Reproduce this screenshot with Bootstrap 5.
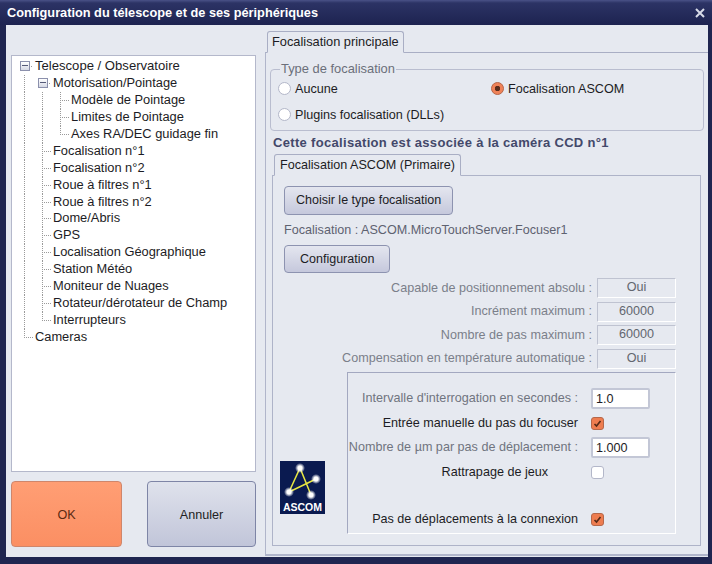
<!DOCTYPE html>
<html lang="fr">
<head>
  <meta charset="UTF-8">
  <title>Configuration du télescope</title>
  <link href="https://cdn.jsdelivr.net/npm/bootstrap@5.3.2/dist/css/bootstrap.min.css" rel="stylesheet">
  <style>
    body { margin: 0; width: 712px; height: 564px; overflow: hidden; background: #1f2550; font-family: "Liberation Sans", Arial, sans-serif; font-size: 12.6px; color: #1c1c24; }
    .win-title { height: 25px; padding: 0 7px 0 7px; color: #fff; font-weight: 700; font-size: 12.75px; background: linear-gradient(#4a5287 0, #2c3365 3px, #1d2350 100%); }
    .win-close { width: 10px; height: 10px; }
    .win-client { width: 702px; height: 532px; margin-left: 6px; background: #e6e9f0; }

    .side-col { width: 245px; margin-left: 5px; padding-top: 30px; }
    .tree-box { height: 417px; background: #fff; border: 1px solid #b4b8cb; padding: 2px 0 0 3px; font-size: 12.85px; }
    .tree-row { height: 16.95px; line-height: 16.95px; white-space: nowrap; }
    .tg { width: 18px; height: 100%; flex: none; background-repeat: no-repeat; }
    .tg-v { background-image: repeating-linear-gradient(#9a9a9a 0 1px, transparent 1px 2px); background-size: 1px 100%; background-position: 9px 0; }
    .tg-t { background-image: repeating-linear-gradient(#9a9a9a 0 1px, transparent 1px 2px), repeating-linear-gradient(90deg, #9a9a9a 0 1px, transparent 1px 2px); background-size: 1px 100%, 9px 1px; background-position: 9px 0, 9px 8px; }
    .tg-l { background-image: repeating-linear-gradient(#9a9a9a 0 1px, transparent 1px 2px), repeating-linear-gradient(90deg, #9a9a9a 0 1px, transparent 1px 2px); background-size: 1px 9px, 9px 1px; background-position: 9px 0, 9px 8px; }
    .tg-m { display: flex; align-items: center; padding-left: 5px; background-image: repeating-linear-gradient(90deg, #9a9a9a 0 1px, transparent 1px 2px); background-size: 4px 1px; background-position: 14px 8px; }
    .tg-m i { display: block; width: 10px; height: 10px; border: 1px solid #8b90ac; background: linear-gradient(#fff, #d5d8e4); position: relative; }
    .tg-m i::after { content: ""; position: absolute; left: 1px; right: 1px; top: 3px; height: 1px; background: #555a78; }
    .tree-label { margin-left: 2px; }
    .tree-root { font-size: 13.1px; }

    .big-btn { height: 66px; padding: 2px 0 0; border-radius: 4px; font-size: 12.6px; color: #222; }
    .big-ok, .big-ok:hover { width: 111px; background: linear-gradient(#ff9e74, #fb8f63); border: 1px solid #cf866b; color: #5a2a12; }
    .big-no, .big-no:hover { width: 109px; background: linear-gradient(#dfe2ec, #c1c5d9); border: 1px solid #7e85a6; color: #222; }
    .side-btns { margin-top: 9px; }

    .main-col { width: 443px; margin-left: 9px; padding-top: 5px; }
    .nav-tabs.soft-tabs { border-bottom: 0; flex-wrap: nowrap; }
    .soft-tabs .nav-link, .soft-tabs .nav-link.active { height: 22px; line-height: 19px; padding: 0 5px; margin: 0; font-size: 12.6px; color: #1c1c24; white-space: nowrap; background: #e6e9f0; border: 1px solid #a9aec4; border-bottom-color: #e6e9f0; border-radius: 3px 3px 0 0; position: relative; bottom: -1px; }
    .tabs-outer { margin-left: 2px; }
    .tabs-outer .nav-link, .tabs-outer .nav-link.active { padding: 0 4px; font-size: 12.8px; }
    .tabs-inner .nav-link, .tabs-inner .nav-link.active { line-height: 21px; }
    .pane-outer { height: 504px; border: 1px solid #b0b5ca; border-right: 0; border-top-color: #a9aec4; border-bottom-width: 2px; }
    .type-group { width: 434px; height: 69px; margin: 9px 0 0 4px; padding: 0 0 0 7px; border: 1px solid #b9bdcf; border-radius: 4px; min-width: 0; }
    .type-group legend { float: none; width: auto; margin: 0 0 0 2px; padding: 0 1px; font-size: 12.9px; line-height: 14px; color: #6b6f7a; }
    .radio-row { height: 26px; }
    .radio-cell { width: 213px; }
    .form-check-input.soft-radio { width: 13px; height: 13px; margin: 0 4px 0 0; flex: none; border: 1px solid #b3b7c9; background-color: #fff; background-image: none; box-shadow: none; }
    .form-check-input.soft-radio:checked { border-color: #b5674a; background-color: #f08258; background-image: radial-gradient(circle, #5a2c1c 0 2.5px, transparent 3px); }
    .assoc-text { margin: 4px 0 3px 7px; font-size: 13px; line-height: 15px; font-weight: 700; letter-spacing: .32px; color: #43486a; }
    .tabs-inner { margin-left: 8px; }
    .pane-inner { width: 429px; height: 371px; margin-left: 6px; border: 1px solid #aeb3c8; padding: 10px 0 0 11px; }
    .small-btn, .small-btn:hover { height: 29px; padding: 0 11px; font-size: 12.5px; color: #1c1c24; background: linear-gradient(#e4e6ef, #c5c8dc); border: 1px solid #8d93b0; border-radius: 4px; }
    .small-btn-cfg, .small-btn-cfg:hover { display: block; height: 28px; padding: 0 15px; margin-bottom: 5px; }
    .focus-name { height: 30px; line-height: 30px; color: #5e6270; }
    .info-row { height: 20px; margin-bottom: 3.6px; padding-right: 24px; color: #7b7f8a; }
    .info-val { width: 79px; height: 20px; margin-left: 5px; line-height: 16px; text-align: center; color: #62666f; border: 1px solid; border-color: #bfc3d1 #fff #fff #bfc3d1; }
    .logo-box { width: 45px; height: 53px; margin: 0 22px 20px -4px; flex: none; }
    .opt-group { width: 329px; height: 162px; padding-top: 13px; border: 1px solid; border-color: #a3a8c0 #fff #fff #a3a8c0; }
    .opt-row { height: 24.5px; }
    .opt-gap { height: 23px; }
    .opt-label { width: 230px; flex: none; text-align: right; white-space: nowrap; }
    .opt-short { padding-right: 30px; }
    .opt-dim { color: #70747f; }
    .opt-ctl { margin-left: 13px; }
    .opt-input.form-control { width: 59px; height: 21px; min-height: 0; padding: 0 3px; font-size: 12.6px; line-height: 17px; color: #1c1c24; border: 2px solid #c3c7d6; border-radius: 2px; box-shadow: none; }
    .form-check-input.soft-check { width: 13px; height: 13px; margin: 0 0 0 13px; border: 1px solid #b3b7c9; border-radius: 3px; background-color: #fff; box-shadow: none; }
    .form-check-input.soft-check:checked { background-color: #ee7d50; border-color: #b5674a; background-image: url("data:image/svg+xml,%3csvg xmlns='http://www.w3.org/2000/svg' viewBox='0 0 13 13'%3e%3cpath fill='none' stroke='%23552a18' stroke-width='1.7' d='M3.5 7l2 2 4-5'/%3e%3c/svg%3e"); background-size: 13px 13px; }
  </style>
</head>
<body>
  <div class="win-title d-flex align-items-center justify-content-between">
    <span>Configuration du télescope et de ses périphériques</span>
    <svg class="win-close" viewBox="0 0 10 10"><path d="M1 1l8 8M9 1l-8 8" stroke="#d8dbe8" stroke-width="2"/></svg>
  </div>
  <div class="win-client d-flex">
    <div class="side-col">
      <div class="tree-box">
        <div class="tree-row d-flex"><span class="tg tg-m"><i></i></span><span class="tree-label tree-root">Telescope / Observatoire</span></div>
        <div class="tree-row d-flex"><span class="tg tg-v"></span><span class="tg tg-m"><i></i></span><span class="tree-label">Motorisation/Pointage</span></div>
        <div class="tree-row d-flex"><span class="tg tg-v"></span><span class="tg tg-v"></span><span class="tg tg-t"></span><span class="tree-label">Modèle de Pointage</span></div>
        <div class="tree-row d-flex"><span class="tg tg-v"></span><span class="tg tg-v"></span><span class="tg tg-t"></span><span class="tree-label">Limites de Pointage</span></div>
        <div class="tree-row d-flex"><span class="tg tg-v"></span><span class="tg tg-v"></span><span class="tg tg-l"></span><span class="tree-label">Axes RA/DEC guidage fin</span></div>
        <div class="tree-row d-flex"><span class="tg tg-v"></span><span class="tg tg-t"></span><span class="tree-label">Focalisation n°1</span></div>
        <div class="tree-row d-flex"><span class="tg tg-v"></span><span class="tg tg-t"></span><span class="tree-label">Focalisation n°2</span></div>
        <div class="tree-row d-flex"><span class="tg tg-v"></span><span class="tg tg-t"></span><span class="tree-label">Roue à filtres n°1</span></div>
        <div class="tree-row d-flex"><span class="tg tg-v"></span><span class="tg tg-t"></span><span class="tree-label">Roue à filtres n°2</span></div>
        <div class="tree-row d-flex"><span class="tg tg-v"></span><span class="tg tg-t"></span><span class="tree-label">Dome/Abris</span></div>
        <div class="tree-row d-flex"><span class="tg tg-v"></span><span class="tg tg-t"></span><span class="tree-label">GPS</span></div>
        <div class="tree-row d-flex"><span class="tg tg-v"></span><span class="tg tg-t"></span><span class="tree-label">Localisation Géographique</span></div>
        <div class="tree-row d-flex"><span class="tg tg-v"></span><span class="tg tg-t"></span><span class="tree-label">Station Météo</span></div>
        <div class="tree-row d-flex"><span class="tg tg-v"></span><span class="tg tg-t"></span><span class="tree-label">Moniteur de Nuages</span></div>
        <div class="tree-row d-flex"><span class="tg tg-v"></span><span class="tg tg-t"></span><span class="tree-label">Rotateur/dérotateur de Champ</span></div>
        <div class="tree-row d-flex"><span class="tg tg-v"></span><span class="tg tg-l"></span><span class="tree-label">Interrupteurs</span></div>
        <div class="tree-row d-flex"><span class="tg tg-l"></span><span class="tree-label">Cameras</span></div>
      </div>
      <div class="d-flex justify-content-between side-btns">
        <button type="button" class="btn big-btn big-ok">OK</button>
        <button type="button" class="btn big-btn big-no">Annuler</button>
      </div>
    </div>

    <div class="main-col">
      <ul class="nav nav-tabs soft-tabs tabs-outer">
        <li class="nav-item"><a class="nav-link active" href="#">Focalisation principale</a></li>
      </ul>
      <div class="pane-outer">
        <fieldset class="type-group">
          <legend>Type de focalisation</legend>
          <div class="radio-row d-flex align-items-center">
            <label class="radio-cell d-flex align-items-center"><input class="form-check-input soft-radio" type="radio" name="foc">Aucune</label>
            <label class="d-flex align-items-center"><input class="form-check-input soft-radio" type="radio" name="foc" checked>Focalisation ASCOM</label>
          </div>
          <div class="radio-row d-flex align-items-center">
            <label class="d-flex align-items-center"><input class="form-check-input soft-radio" type="radio" name="foc">Plugins focalisation (DLLs)</label>
          </div>
        </fieldset>
        <div class="assoc-text">Cette focalisation est associée à la caméra CCD n°1</div>
        <ul class="nav nav-tabs soft-tabs tabs-inner">
          <li class="nav-item"><a class="nav-link active" href="#">Focalisation ASCOM (Primaire)</a></li>
        </ul>
        <div class="pane-inner">
          <button type="button" class="btn small-btn">Choisir le type focalisation</button>
          <div class="focus-name">Focalisation : ASCOM.MicroTouchServer.Focuser1</div>
          <button type="button" class="btn small-btn small-btn-cfg">Configuration</button>
          <div class="info-row d-flex justify-content-end align-items-center"><span>Capable de positionnement absolu :</span><span class="info-val">Oui</span></div>
          <div class="info-row d-flex justify-content-end align-items-center"><span>Incrément maximum :</span><span class="info-val">60000</span></div>
          <div class="info-row d-flex justify-content-end align-items-center"><span>Nombre de pas maximum :</span><span class="info-val">60000</span></div>
          <div class="info-row d-flex justify-content-end align-items-center"><span>Compensation en température automatique :</span><span class="info-val">Oui</span></div>
          <div class="d-flex align-items-end">
            <svg class="logo-box" viewBox="0 0 45 53">
              <defs>
                <radialGradient id="glow"><stop offset="0.4" stop-color="#fff"/><stop offset="1" stop-color="#fff" stop-opacity="0"/></radialGradient>
              </defs>
              <rect width="45" height="53" fill="#0a1a50"/>
              <path d="M9 31L20 7L31 34M9 31L36 18" fill="none" stroke="#e6e642" stroke-width="1.5"/>
              <circle cx="20" cy="7" r="5" fill="url(#glow)"/>
              <circle cx="36" cy="18" r="5" fill="url(#glow)"/>
              <circle cx="9" cy="31" r="5" fill="url(#glow)"/>
              <circle cx="31" cy="34" r="5" fill="url(#glow)"/>
              <text x="22.5" y="50" text-anchor="middle" fill="#fff" font-family="Liberation Sans" font-weight="700" font-size="10.5">ASCOM</text>
            </svg>
            <div class="opt-group">
              <div class="opt-row d-flex align-items-center"><span class="opt-label opt-dim">Intervalle d'interrogation en secondes :</span><input class="form-control opt-input opt-ctl" value="1.0"></div>
              <div class="opt-row d-flex align-items-center"><span class="opt-label">Entrée manuelle du pas du focuser</span><input class="form-check-input soft-check" type="checkbox" checked></div>
              <div class="opt-row d-flex align-items-center"><span class="opt-label opt-dim">Nombre de µm par pas de déplacement :</span><input class="form-control opt-input opt-ctl" value="1.000"></div>
              <div class="opt-row d-flex align-items-center"><span class="opt-label opt-short">Rattrapage de jeux</span><input class="form-check-input soft-check" type="checkbox"></div>
              <div class="opt-gap"></div>
              <div class="opt-row d-flex align-items-center"><span class="opt-label">Pas de déplacements à la connexion</span><input class="form-check-input soft-check" type="checkbox" checked></div>
            </div>
          </div>
        </div>
      </div>
    </div>
  </div>
</body>
</html>
